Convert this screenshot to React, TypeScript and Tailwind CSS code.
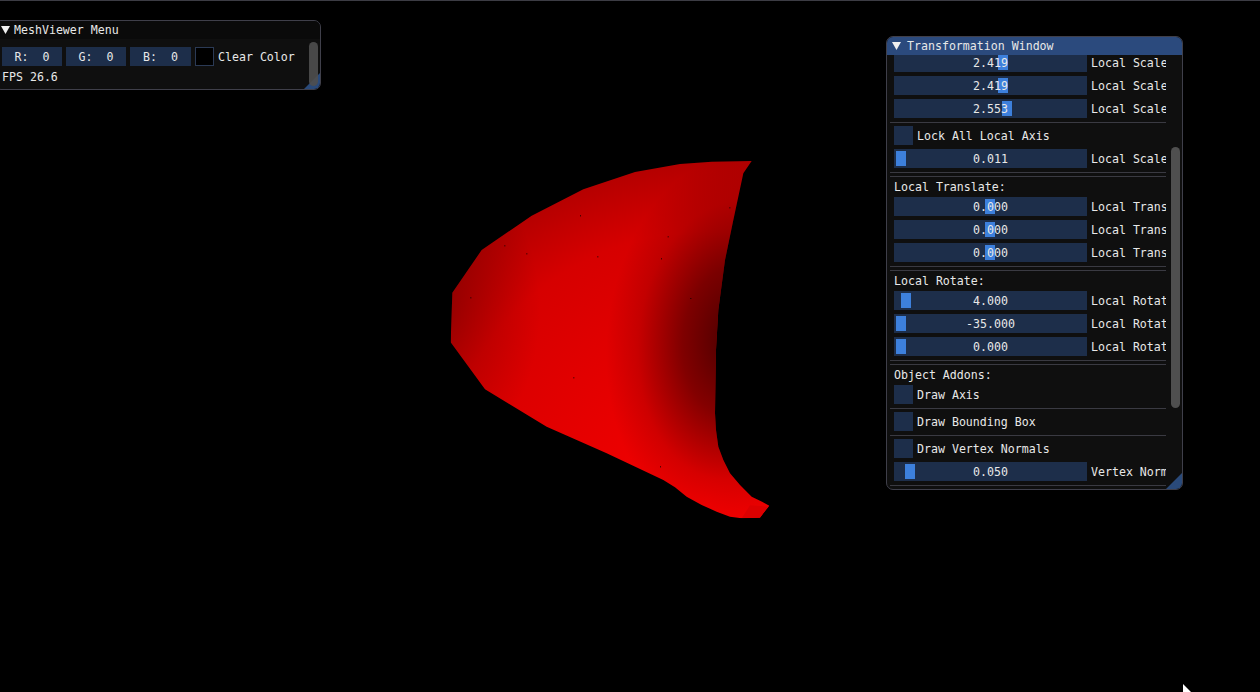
const font = { fontFamily: '"DejaVu Sans Mono", "Liberation Mono", monospace' };

function Grip() {
  return (
    <svg className="absolute right-0 bottom-0" width="16" height="16" viewBox="0 0 16 16">
      <polygon points="16,0 16,16 0,16" fill="#2a4a7a" />
    </svg>
  );
}

function Arrow({ className }: { className: string }) {
  return (
    <svg className={className} width="9" height="8" viewBox="0 0 9 8">
      <polygon points="0,0 9,0 4.5,8" fill="#f0f0f0" />
    </svg>
  );
}

function Slider({ value, grab, label }: { value: string; grab: string; label: string }) {
  return (
    <div className="flex h-[19px] shrink-0 items-center gap-[4px] pl-[4px]">
      <div className="relative flex h-[19px] w-[193px] shrink-0 items-center justify-center bg-[#1d2e4a] pt-[2px]">
        <div className={`absolute top-[2px] bottom-[2px] w-[10px] bg-[#3d80dc] ${grab}`} />
        <span className="relative">{value}</span>
      </div>
      <span className="overflow-hidden pt-[2px] whitespace-pre">{label}</span>
    </div>
  );
}

function Check({ label }: { label: string }) {
  return (
    <div className="flex h-[19px] shrink-0 items-center gap-[4px] pl-[4px]">
      <div className="h-[19px] w-[19px] bg-[#1d2e4a]" />
      <span className="pt-[2px]">{label}</span>
    </div>
  );
}

function Sep() {
  return <div className="-mb-px h-px w-full shrink-0 bg-[#3a3a42]" />;
}

function Heading({ children }: { children: string }) {
  return <div className="h-[13px] shrink-0 pt-px pl-[4px] leading-[13px]">{children}</div>;
}

function Mesh() {
  const outline =
    'M935,33 L815,35 720,42 585,66 430,118 275,197 125,300 37,428 32,577 135,718 320,830 500,910 670,990 705,1012 740,1040 785,1065 830,1085 870,1100 905,1105 960,1103 988,1067 960,1052 935,1040 900,1005 870,970 850,930 835,890 828,840 825,790 828,600 835,480 855,330 880,210 910,70 Z';
  const dots = [
    [420, 196], [193, 286], [259, 310], [472, 319], [663, 325], [683, 259], [868, 172],
    [91, 442], [751, 444], [400, 682], [660, 949],
  ];
  return (
    <svg className="absolute top-[150px] left-[440px]" width="340" height="380" viewBox="0 0 1020 1140">
      <defs>
        <clipPath id="mesh-clip">
          <path d={outline} shapeRendering="crispEdges" />
        </clipPath>
        <radialGradient id="mesh-base" gradientUnits="userSpaceOnUse" cx="800" cy="1050" r="1150">
          <stop offset="0" stopColor="#f60000" />
          <stop offset="0.45" stopColor="#e20000" />
          <stop offset="0.7" stopColor="#d60000" />
          <stop offset="0.88" stopColor="#b40000" />
          <stop offset="1" stopColor="#a00000" />
        </radialGradient>
        <radialGradient id="mesh-shade" gradientUnits="userSpaceOnUse" cx="0" cy="0" r="1"
          gradientTransform="translate(880 570) rotate(6) scale(380 560)">
          <stop offset="0" stopColor="#000" stopOpacity="0.68" />
          <stop offset="0.4" stopColor="#000" stopOpacity="0.44" />
          <stop offset="0.75" stopColor="#000" stopOpacity="0.12" />
          <stop offset="1" stopColor="#000" stopOpacity="0" />
        </radialGradient>
        <radialGradient id="mesh-left" gradientUnits="userSpaceOnUse" cx="0" cy="0" r="1"
          gradientTransform="translate(0 480) scale(300 460)">
          <stop offset="0" stopColor="#000" stopOpacity="0.22" />
          <stop offset="1" stopColor="#000" stopOpacity="0" />
        </radialGradient>
      </defs>
      <g clipPath="url(#mesh-clip)">
        <rect width="1020" height="1140" fill="url(#mesh-base)" />
        <rect width="1020" height="1140" fill="url(#mesh-left)" />
        <rect width="1020" height="1140" fill="url(#mesh-shade)" />
        <polygon points="905,1105 930,1066 985,1070 960,1103" fill="#dc0000" />
      </g>
      {dots.map(([x, y]) => (
        <rect key={`${x}-${y}`} x={x} y={y} width="3" height="3" fill="#100000" />
      ))}
    </svg>
  );
}

function MeshViewerMenu() {
  return (
    <div className="absolute top-[20px] left-[-6px] flex h-[70px] w-[327px] flex-col overflow-hidden rounded-[7px] border border-[#3f3f4a] bg-[#0f0f0f]">
      <div className="relative flex h-[18px] shrink-0 items-center bg-[#0a0a0a] pt-[2px] pl-[19px]">
        <Arrow className="absolute top-[5px] left-[6px]" />
        <span>MeshViewer Menu</span>
      </div>
      <div className="relative flex-1">
        <div className="flex flex-col gap-[4px] pt-[8px] pl-[7px]">
          <div className="flex h-[19px] items-center gap-[4px]">
            <div className="flex h-[19px] w-[60px] items-center justify-center bg-[#1d2e4a] pt-[2px] whitespace-pre">R:  0</div>
            <div className="flex h-[19px] w-[60px] items-center justify-center bg-[#1d2e4a] pt-[2px] whitespace-pre">G:  0</div>
            <div className="flex h-[19px] w-[61px] items-center justify-center bg-[#1d2e4a] pt-[2px] whitespace-pre">B:  0</div>
            <div className="h-[19px] w-[19px] border border-[#2b3a55] bg-black" />
            <span className="pt-[2px] whitespace-pre">Clear Color</span>
          </div>
          <div className="h-[13px] pt-px leading-[13px]">FPS 26.6</div>
        </div>
        <Grip />
        <div className="absolute top-[3px] right-[2px] bottom-[3px] w-[9px] rounded-[5px] bg-[#4f4f4f]/90" />
      </div>
    </div>
  );
}

function TransformationWindow() {
  return (
    <div className="absolute top-[36px] left-[886px] flex h-[454px] w-[297px] flex-col overflow-hidden rounded-[7px] border border-[#3f3f4a] bg-[#0f0f0f]">
      <div className="relative flex h-[18px] shrink-0 items-center bg-[#2b4a7d] pt-[2px] pl-[20px]">
        <Arrow className="absolute top-[5px] left-[5px]" />
        <span>Transformation Window</span>
      </div>
      <div className="relative flex min-h-0 flex-1">
        <div className="ml-[3px] flex h-full w-[276px] shrink-0 flex-col gap-[4px] overflow-hidden">
          <div className="-mt-[2px] flex shrink-0 flex-col gap-[4px]">
            <Slider value="2.419" grab="left-[104px]" label="Local Scale X" />
            <Slider value="2.419" grab="left-[104px]" label="Local Scale Y" />
            <Slider value="2.553" grab="left-[108px]" label="Local Scale Z" />
          </div>
          <Sep />
          <Check label="Lock All Local Axis" />
          <Slider value="0.011" grab="left-[2px]" label="Local Scale All" />
          <Sep />
          <Sep />
          <Heading>Local Translate:</Heading>
          <Slider value="0.000" grab="left-[91px]" label="Local Translate X" />
          <Slider value="0.000" grab="left-[91px]" label="Local Translate Y" />
          <Slider value="0.000" grab="left-[91px]" label="Local Translate Z" />
          <Sep />
          <Sep />
          <Heading>Local Rotate:</Heading>
          <Slider value="4.000" grab="left-[7px]" label="Local Rotate X" />
          <Slider value="-35.000" grab="left-[2px]" label="Local Rotate Y" />
          <Slider value="0.000" grab="left-[2px]" label="Local Rotate Z" />
          <Sep />
          <Sep />
          <Heading>Object Addons:</Heading>
          <Check label="Draw Axis" />
          <Sep />
          <Check label="Draw Bounding Box" />
          <Sep />
          <Check label="Draw Vertex Normals" />
          <Slider value="0.050" grab="left-[11px]" label="Vertex Normal Length" />
          <Sep />
        </div>
        <Grip />
        <div className="mt-[92px] ml-[5px] h-[261px] w-[9px] rounded-[5px] bg-[#4f4f4f]" />
      </div>
    </div>
  );
}

export default function App() {
  return (
    <div className="relative h-[692px] w-[1260px] overflow-hidden bg-black text-[11.6px] leading-none text-[#e8e8e8]" style={font}>
      <div className="h-px w-full bg-[#3c3c44]" />
      <Mesh />
      <MeshViewerMenu />
      <TransformationWindow />
      <svg className="absolute top-[684px] left-[1183px]" width="8" height="8" viewBox="0 0 8 8">
        <polygon points="0,0 8,8 0,8" fill="#fff" />
      </svg>
    </div>
  );
}
